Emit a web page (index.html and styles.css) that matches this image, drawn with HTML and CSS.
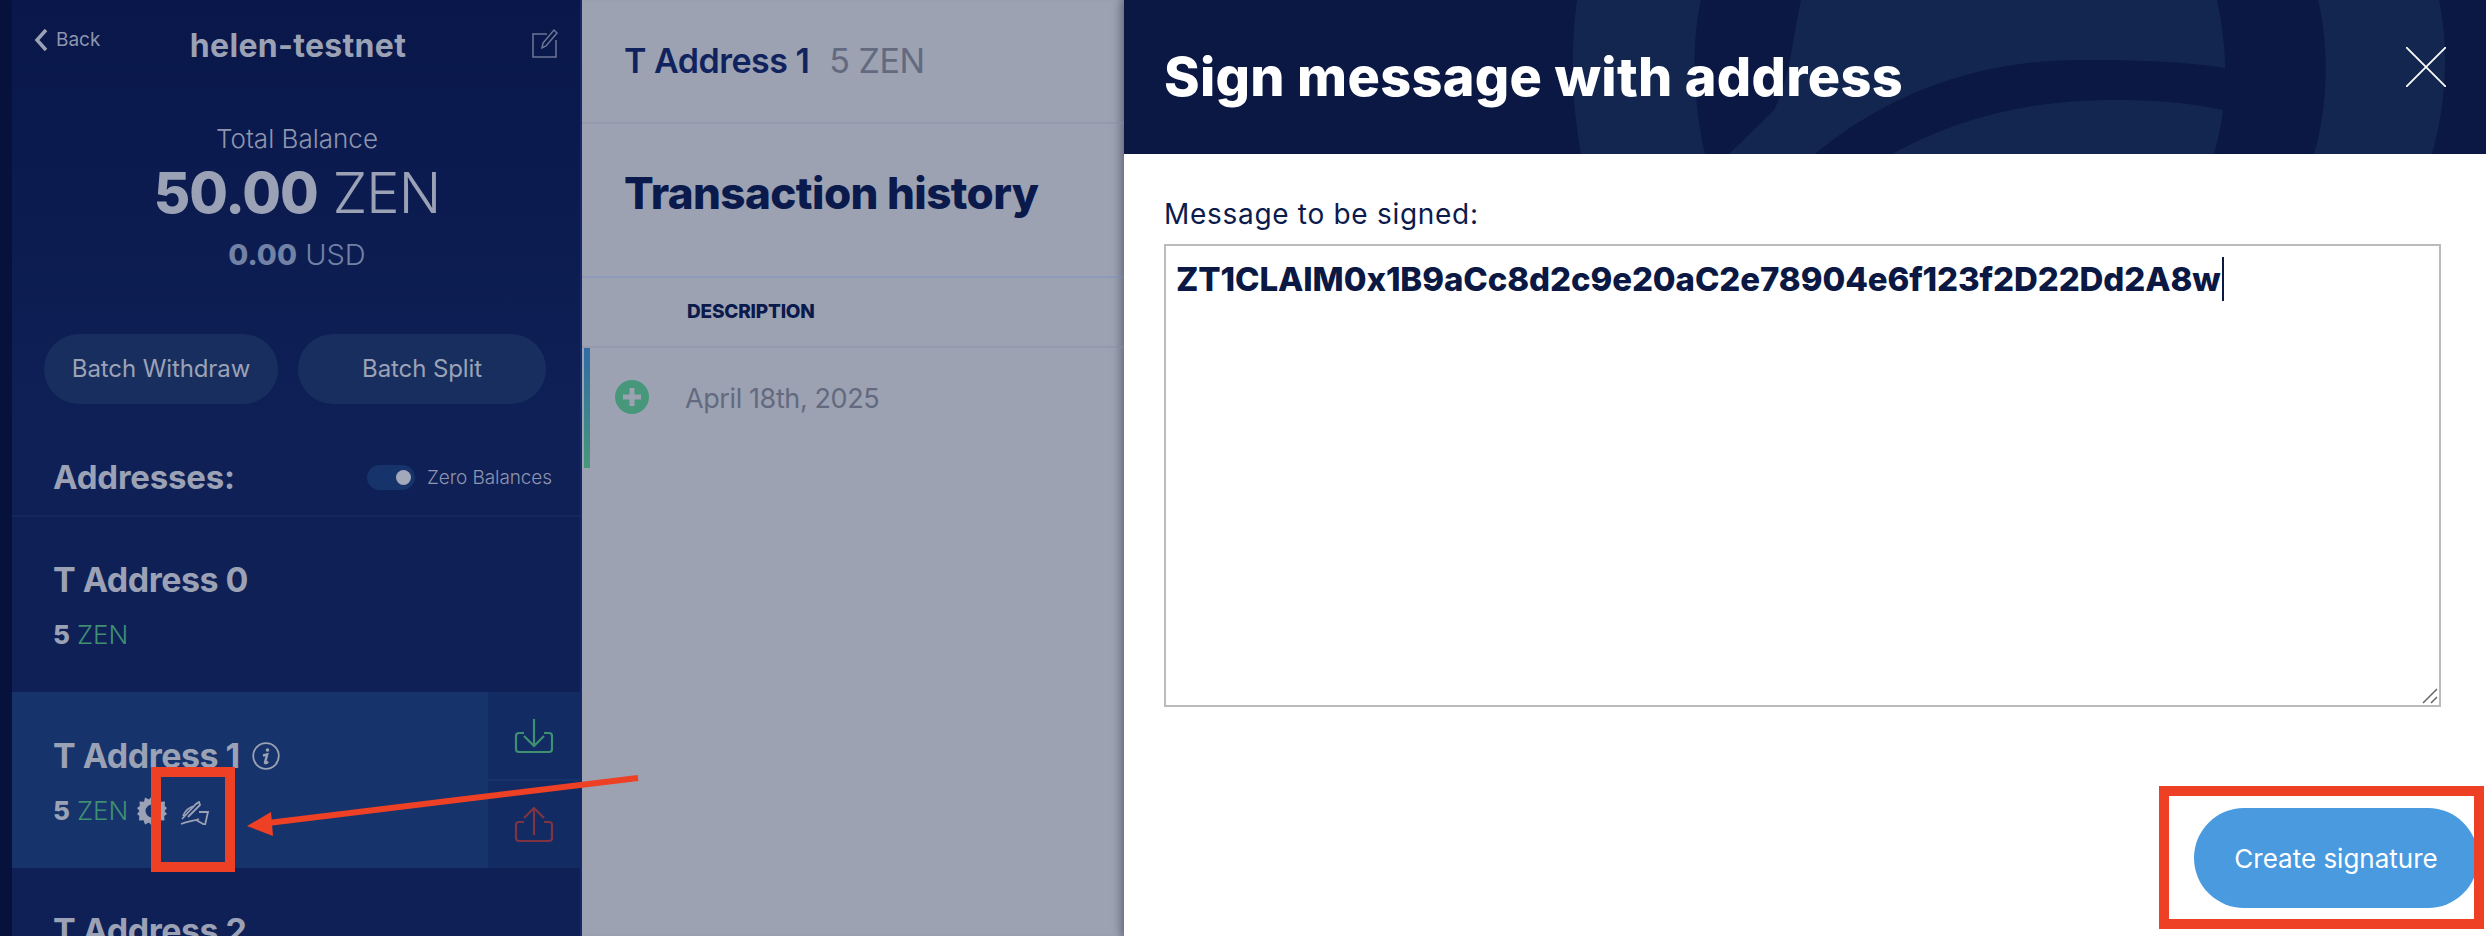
FILE: index.html
```html
<!DOCTYPE html>
<html lang="en">
<head>
<meta charset="utf-8">
<title>Sign message with address</title>
<link rel="stylesheet" href="styles.css">
</head>
<body>
<div class="app">
  <div class="strip"></div>
  <aside class="sidebar">
    <header class="side-top">
      <a class="back">
        <svg class="chevron" viewBox="0 0 14 24"><path d="M12 2 3 12l9 10"/></svg>
        <span>Back</span>
      </a>
      <h2 class="wallet-name">helen-testnet</h2>
      <svg class="edit" viewBox="0 0 26 30"><path d="M15 6H1v23h23V12M10 20l1-5L22 2l3 3-11 13z"/></svg>
    </header>
    <section class="balance">
      <div class="bal-label">Total Balance</div>
      <div class="bal-main"><b>50.00</b> ZEN</div>
      <div class="bal-usd"><b>0.00</b> USD</div>
    </section>
    <div class="batch">
      <button class="pill pill-w">Batch Withdraw</button>
      <button class="pill pill-s">Batch Split</button>
    </div>
    <div class="addr-head">
      <h3>Addresses:</h3>
      <div class="zero">
        <span class="toggle"><i></i></span>
        <span>Zero Balances</span>
      </div>
    </div>
    <div class="addr">
      <div class="addr-info">
        <div class="addr-name">T Address 0</div>
        <div class="addr-bal"><b>5</b> <span class="green">ZEN</span></div>
      </div>
    </div>
    <div class="addr addr-active">
      <div class="addr-info">
        <div class="addr-name">T Address 1
          <svg class="info" viewBox="0 0 28 28"><circle cx="14" cy="14" r="12.8"/><circle class="info-dot" cx="15.500" cy="8" r="1.800"/><path class="info-i" d="M11 13.500 15.200 12.500 13 20.500c0 1.200 1.500 1 3-1"/></svg>
        </div>
        <div class="addr-bal"><b>5</b> <span class="green">ZEN</span>
          <svg class="gear" viewBox="0 0 30 30"><path fill-rule="evenodd" d="M15 0l3 3.500 4-2 1.500 4.300 4.500-.3-.3 4.500L30 12l-2.500 3 2.500 3-2.800 2 .3 4.500-4.500-.3L22 28.500l-4-2-3 3.500-3-3.500-4 2-1.500-4.300-4.500.3.300-4.500L0 18l2.500-3L0 12l2.800-2-.3-4.500 4.500.3L8 1.500l4 2zM15 8.500a6.500 6.500 0 1 0 0 13 6.500 6.500 0 0 0 0-13z"/></svg>
          <svg class="sign" viewBox="0 0 30 24"><path d="M2 18 16 3l3-2 1 3L8 16M3 15C6 8 10 6 14 5M19 11h9l-3 13-9-5M1 23c7-3 13-3 18-5"/></svg>
        </div>
      </div>
      <div class="actions">
        <div class="act">
          <svg class="act-icon in" viewBox="0 0 40 36"><path d="M10 15H5a3 3 0 0 0-3 3v13a3 3 0 0 0 3 3h30a3 3 0 0 0 3-3V18a3 3 0 0 0-3-3h-5M20 1v27M10 18l10 10 10-10"/></svg>
        </div>
        <div class="act">
          <svg class="act-icon out" viewBox="0 0 40 36"><path d="M10 15H5a3 3 0 0 0-3 3v13a3 3 0 0 0 3 3h30a3 3 0 0 0 3-3V18a3 3 0 0 0-3-3h-5M20 28V2M10 11 20 1l10 10"/></svg>
        </div>
      </div>
    </div>
    <div class="addr">
      <div class="addr-info">
        <div class="addr-name">T Address 2</div>
      </div>
    </div>
  </aside>
  <main class="main">
    <div class="main-head"><b>T Address 1</b><span>5 ZEN</span></div>
    <h1 class="tx-title">Transaction history</h1>
    <div class="tx-cols">DESCRIPTION</div>
    <div class="tx-row">
      <svg class="plus" viewBox="0 0 34 34"><circle cx="17" cy="17" r="17"/><path d="M17 8v18M8 17h18"/></svg>
      <span>April 18th, 2025</span>
    </div>
  </main>
  <section class="modal">
    <header class="modal-head">
      <svg class="pattern" viewBox="0 0 1362 154">
        <path d="M453 0C447 45 447 100 457 154H581C569 100 567 45 577 0Z"/>
        <path d="M677 0C668 40 666 80 650 110L605 154H1090C1103 110 1106 60 1093 0Z"/>
        <path d="M1194 0C1204 40 1206 100 1190 154H1308C1324 100 1324 40 1315 0Z"/>
        <path class="cut" d="M691 154C780 80 880 58 968 60 1020 60 1060 62 1103 68L1100 110C1060 102 1030 100 989 100 900 100 830 120 768 154Z"/>
      </svg>
      <h1>Sign message with address</h1>
      <svg class="close" viewBox="0 0 40 40"><path d="M0 0 40 40M40 0 0 40"/></svg>
    </header>
    <div class="modal-body">
      <label class="msg-label">Message to be signed:</label>
      <div class="msg-box">
        <span class="msg-text">ZT1CLAIM0x1B9aCc8d2c9e20aC2e78904e6f123f2D22Dd2A8w</span><span class="caret"></span>
        <svg class="grip" viewBox="0 0 16 16"><path d="M1 15 15 1M9 15l6-6"/></svg>
      </div>
      <div class="modal-foot">
        <button class="create">Create signature</button>
      </div>
    </div>
  </section>
  <svg class="annot" viewBox="0 0 2486 936">
    <path class="annot-line" d="M638 778 268 823"/>
    <path class="annot-head" d="M247 826 271 812 273 836Z"/>
    <rect class="annot-box" x="156" y="772" width="74" height="95"/>
    <rect class="annot-box" x="2164" y="791" width="315" height="133"/>
  </svg>
</div>
</body>
</html>
```
FILE: styles.css
```css
* { box-sizing: border-box; }
html, body { margin: 0; padding: 0; }
body { width: 2486px; height: 936px; overflow: hidden; font-family: "Inter", "Liberation Sans", sans-serif; background: #fff; }
h1, h2, h3 { margin: 0; }
button { font-family: inherit; border: 0; padding: 0; }
.app { position: relative; display: flex; width: 2486px; height: 936px; overflow: hidden; }
.strip { width: 12px; background: #06123c; flex: none; }
.sidebar { width: 568px; flex: none; color: #9ca2b5; background: linear-gradient(180deg, #09174a 0, #0e2056 45%, #0e2056 100%); display: flex; flex-direction: column; overflow: hidden; }
.side-top { height: 92px; flex: none; display: flex; position: relative; padding: 28px 22px 0 22px; justify-content: space-between; }
.back { display: flex; align-items: flex-start; gap: 8px; font-size: 19px; line-height: 24px; color: #8e95ad; }
.chevron { width: 14px; height: 24px; fill: none; stroke: #9ca2b5; stroke-width: 3.500; }
.wallet-name { position: absolute; left: 156px; top: 26px; font-size: 32px; line-height: 40px; font-weight: 700; letter-spacing: .3px; width: 260px; text-align: center; }
.edit { width: 26px; height: 30px; fill: none; stroke: #6d7695; stroke-width: 1.500; }
.balance { text-align: center; height: 242px; flex: none; padding-top: 30px; width: 572px; margin-left: -1px; }
.bal-label { font-size: 26px; line-height: 34px; color: #8e95ad; font-weight: 300; }
.bal-main { font-size: 56px; line-height: 66px; margin-top: 4px; font-weight: 300; color: #9ca2b5; letter-spacing: -1px; }
.bal-main b { font-weight: 800; }
.bal-usd { font-size: 29px; line-height: 36px; margin-top: 11px; color: #7282a6; font-weight: 300; }
.bal-usd b { font-weight: 800; }
.batch { display: flex; gap: 20px; padding-left: 32px; height: 70px; flex: none; }
.pill { height: 70px; border-radius: 35px; background: #172e5f; color: #9ca2b5; font-size: 24px; letter-spacing: -.1px; padding-bottom: 2px; }
.pill-w { width: 234px; }
.pill-s { width: 248px; }
.addr-head { height: 113px; flex: none; display: flex; align-items: center; justify-content: space-between; padding: 35px 28px 0 41px; border-bottom: 2px solid #14285c; }
.addr-head h3 { font-size: 33px; font-weight: 700; color: #9ca2b5; letter-spacing: -.2px; }
.zero { display: flex; align-items: center; gap: 12px; font-size: 19px; color: #8e95ad; font-weight: 300; letter-spacing: -.1px; }
.toggle { width: 48px; height: 25px; border-radius: 13px; background: #16346b; position: relative; display: block; }
.toggle i { position: absolute; right: 4px; top: 5px; width: 15px; height: 15px; border-radius: 50%; background: #a3a9bb; }
.addr { height: 175px; flex: none; display: flex; justify-content: space-between; }
.addr-active { background: #17336b; height: 176px; }
.addr-info { padding: 45px 0 0 41px; }
.addr-active .addr-info { padding-top: 46px; }
.addr-name { font-size: 34px; line-height: 36px; font-weight: 700; color: #9ca2b5; display: flex; align-items: center; gap: 12px; letter-spacing: -.5px; }
.addr-bal { font-size: 26px; line-height: 32px; margin-top: 21px; color: #9ca2b5; display: flex; align-items: center; gap: 7px; }
.addr-bal b { font-weight: 800; }
.green { color: #3f8f72; font-weight: 300; }
.info { width: 28px; height: 28px; fill: none; stroke: #9ca2b5; stroke-width: 1.800; }
.info-i { stroke-width: 2.400; }
.info-dot { fill: #9ca2b5; stroke: none; }
.gear { width: 30px; height: 30px; fill: #9ca2b5; margin-left: 2px; }
.sign { width: 30px; height: 24px; fill: none; stroke: #9ca2b5; stroke-width: 1.800; margin-left: 6px; margin-top: 3px; }
.actions { width: 92px; background: #122b62; display: flex; flex-direction: column; flex: none; }
.act { flex: 1; display: flex; align-items: center; justify-content: center; }
.act:first-child { border-bottom: 2px solid #17336b; }
.act-icon { width: 40px; height: 36px; fill: none; stroke-width: 2.200; }
.in { stroke: #3f8f72; }
.out { stroke: #7f3343; }
.main { width: 544px; flex: none; background: #9ca2b2; color: #0a1a4d; border-left: 2px solid #152a66; display: flex; flex-direction: column; overflow: hidden; box-shadow: inset -8px 0 8px -8px rgba(70, 75, 95, .5); }
.main-head { height: 124px; flex: none; border-bottom: 2px solid #949aac; padding: 41px 0 0 42px; font-size: 34px; line-height: 40px; display: flex; gap: 20px; letter-spacing: -.5px; }
.main-head b { font-weight: 600; color: #11235e; }
.main-head span { color: #636a80; }
.tx-title { height: 154px; flex: none; border-bottom: 2px solid #8f99bb; padding: 42px 0 0 42px; font-size: 44px; line-height: 54px; font-weight: 800; color: #0b1a4c; letter-spacing: -.6px; }
.tx-cols { height: 70px; flex: none; border-bottom: 2px solid #949aac; padding: 22px 0 0 105px; font-size: 19px; line-height: 24px; font-weight: 800; color: #0b1a4c; letter-spacing: -.2px; }
.tx-row { height: 120px; width: 540px; flex: none; display: flex; align-items: center; position: relative; padding: 0 0 20px 31px; font-size: 27px; color: #636a80; gap: 36px; background: linear-gradient(180deg, #2f6ca6, #47977a) left top / 6px 100% no-repeat; margin-left: 2px; }
.tx-row span { letter-spacing: -.4px; }
.plus { width: 34px; height: 34px; flex: none; margin-top: -2px; }
.plus circle { fill: #47977a; }
.plus path { stroke: #9ca2b2; stroke-width: 5; fill: none; }
.modal { width: 1362px; flex: none; background: #fff; display: flex; flex-direction: column; box-shadow: -4px 0 8px rgba(60, 65, 85, .35); position: relative; }
.modal-head { height: 154px; flex: none; background: #0a1843; position: relative; overflow: hidden; display: flex; align-items: center; padding-left: 40px; }
.pattern { position: absolute; left: 0; top: 0; width: 1362px; height: 154px; }
.pattern path { fill: #12264f; }
.pattern .cut { fill: #0a1843; }
.modal-head h1 { position: relative; font-size: 54px; line-height: 60px; font-weight: 800; color: #fff; margin-top: 0; letter-spacing: .3px; }
.close { position: absolute; left: 1282px; top: 47px; width: 40px; height: 40px; fill: none; stroke: #fff; stroke-width: 1.800; }
.modal-body { flex: 1; padding: 44px 45px 0 40px; display: flex; flex-direction: column; }
.msg-label { font-size: 28px; line-height: 32px; color: #0c1b4c; font-weight: 400; letter-spacing: .7px; }
.msg-box { height: 463px; margin-top: 14px; border: 2px solid #bbb; position: relative; padding: 11px 0 0 10px; display: flex; align-items: flex-start; }
.msg-text { font-size: 33px; line-height: 44px; font-weight: 800; color: #0a1843; letter-spacing: -.1px; }
.caret { width: 2px; height: 44px; background: #0a1843; margin-left: 1px; }
.grip { position: absolute; right: 1px; bottom: 1px; width: 16px; height: 16px; fill: none; stroke: #666; stroke-width: 1.500; }
.modal-foot { flex: 1; display: flex; justify-content: flex-end; padding-top: 101px; margin-right: -37px; }
.create { width: 284px; height: 100px; border-radius: 50px; background: #4a9ae0; color: #fff; font-size: 26px; }
.annot { position: absolute; left: 0; top: 0; width: 2486px; height: 936px; pointer-events: none; }
.annot-line { stroke: #ed4025; stroke-width: 6; fill: none; }
.annot-head { fill: #ed4025; }
.annot-box { fill: none; stroke: #ed4025; stroke-width: 10; }
```
